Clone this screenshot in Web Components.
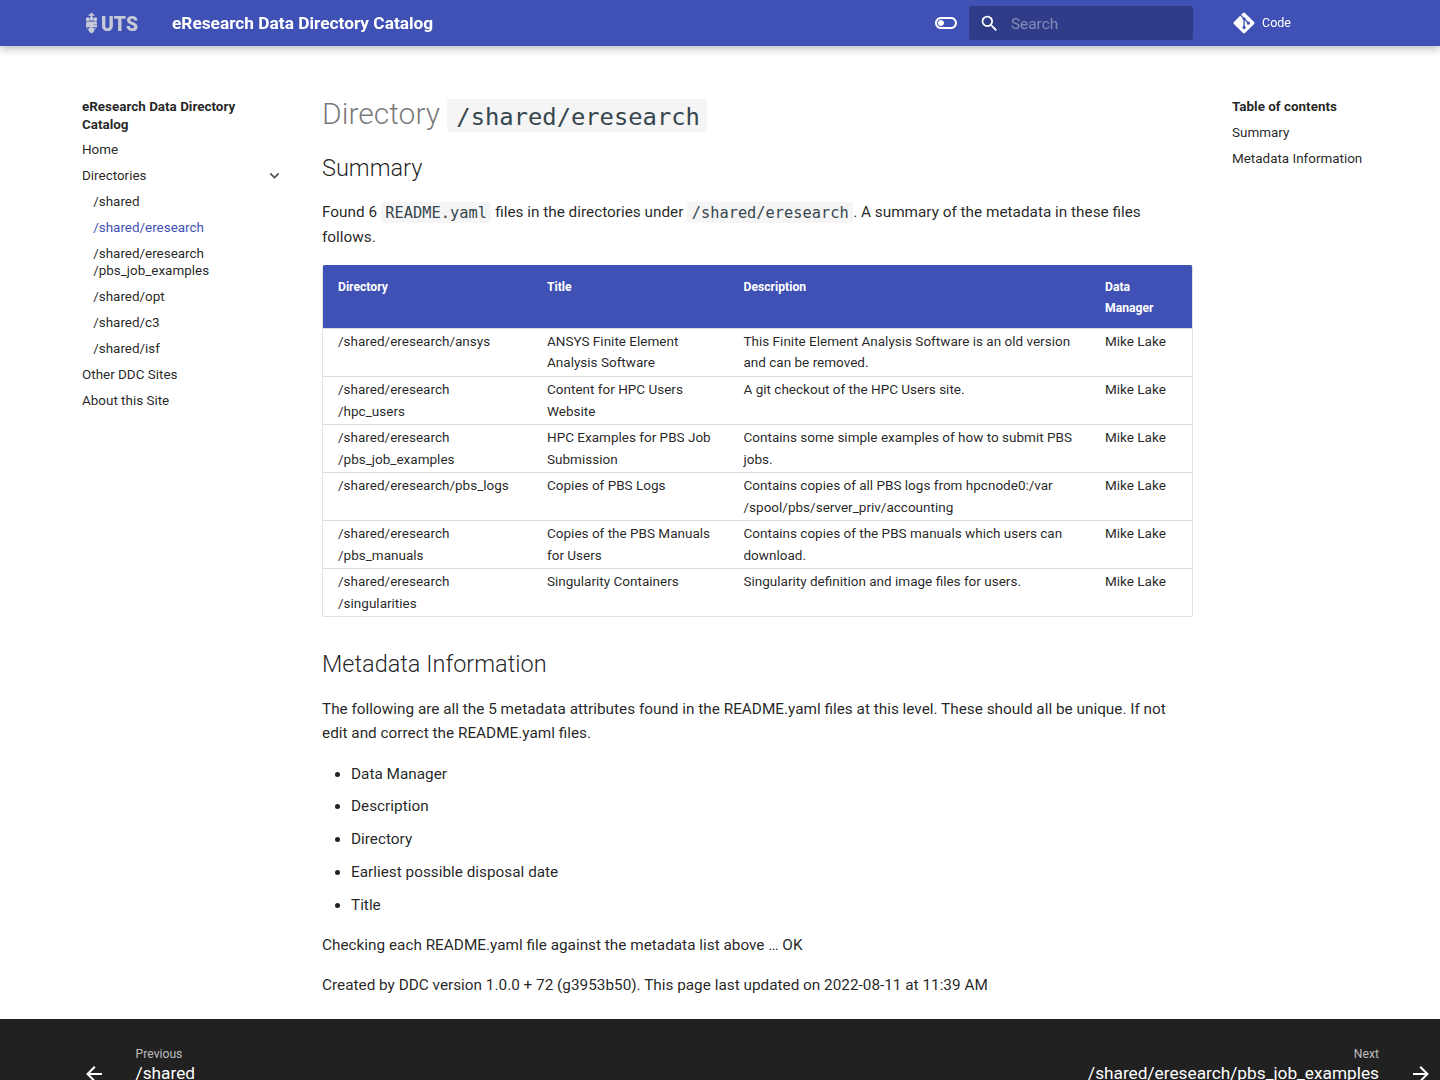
<!DOCTYPE html>
<html lang="en">
<head>
<meta charset="utf-8">
<title>eResearch Data Directory Catalog</title>
<style>
  html, body { margin: 0; padding: 0; height: 1080px; overflow: hidden; background: #fff; }
  body { font-family: Roboto, sans-serif; color: rgba(0,0,0,.87); }
</style>
</head>
<body>
<ddc-header></ddc-header>
<ddc-layout>
  <ddc-sidebar slot="left"></ddc-sidebar>
  <ddc-content></ddc-content>
  <ddc-toc slot="right"></ddc-toc>
</ddc-layout>
<ddc-footer></ddc-footer>

<script>
const ICONS = {
  toggle: 'M17 6H7c-3.31 0-6 2.69-6 6s2.69 6 6 6h10c3.31 0 6-2.69 6-6s-2.69-6-6-6zm0 10H7c-2.21 0-4-1.79-4-4s1.79-4 4-4h10c2.21 0 4 1.79 4 4s-1.79 4-4 4zM7 9c-1.66 0-3 1.34-3 3s1.34 3 3 3 3-1.34 3-3-1.34-3-3-3z',
  search: 'M9.5 3A6.5 6.5 0 0 1 16 9.5c0 1.61-.59 3.09-1.56 4.23l.27.27h.79l5 5-1.5 1.5-5-5v-.79l-.27-.27A6.516 6.516 0 0 1 9.5 16 6.5 6.5 0 0 1 3 9.5 6.5 6.5 0 0 1 9.5 3m0 2C7 5 5 7 5 9.5S7 14 9.5 14 14 12 14 9.5 12 5 9.5 5z',
  back: 'M20 11v2H8l5.5 5.5-1.42 1.42L4.16 12l7.92-7.92L13.5 5.5 8 11h12z',
  next: 'M4 11v2h12l-5.5 5.5 1.42 1.42L19.84 12l-7.92-7.92L10.5 5.5 16 11H4z',
  chevron: 'M7.41 8.59 12 13.17l4.59-4.58L18 10l-6 6-6-6 1.41-1.41z'
};
const GIT = 'M439.55 236.05 244 40.45a28.87 28.87 0 0 0-40.81 0l-40.66 40.63 51.52 51.52c27.06-9.14 52.68 16.77 43.39 43.68l49.66 49.66c34.23-11.8 61.18 31 35.47 56.69-26.49 26.49-70.21-2.87-56-37.34L240.22 199v121.85c25.3 12.54 22.26 41.85 9.08 55a34.34 34.34 0 0 1-48.55 0c-17.57-17.6-11.07-46.91 11.25-56v-123c-20.8-8.51-24.6-30.74-18.64-45L142.57 101 8.45 235.14a28.86 28.86 0 0 0 0 40.81l195.61 195.6a28.86 28.86 0 0 0 40.8 0l194.69-194.69a28.86 28.86 0 0 0 0-40.81z';
const icon = (name, size) => `<svg width="${size}" height="${size}" viewBox="0 0 24 24" fill="currentColor"><path d="${ICONS[name]}"/></svg>`;

class DdcHeader extends HTMLElement {
  connectedCallback() {
    const shadow = this.attachShadow({ mode: 'open' });
    shadow.innerHTML = `
      <style>
        :host {
          display: flex;
          align-items: center;
          position: fixed;
          z-index: 5;
          top: 0; left: 0; right: 0;
          height: 46px;
          background: #3f51b5;
          color: #fff;
          box-shadow: 0 0 4px rgba(0,0,0,.1), 0 4px 8px rgba(0,0,0,.2);
          font-family: Roboto, sans-serif;
        }
        .logo {
          display: flex;
          align-items: center;
          gap: 3px;
          margin-left: 85px;
          width: 87px;
          color: #c6c9d6;
        }
        .logo span {
          display: inline-block;
          padding-top: 2px;
          font: 900 21px/1 Roboto, sans-serif;
          transform: scaleX(.92);
          transform-origin: left center;
        }
        .title {
          flex: 0 0 auto;
          width: 762px;
          padding-top: 1px;
          font-size: 17.3px;
          font-weight: 700;
          line-height: 45px;
        }
        .toggle { display: flex; width: 35px; }
        .search {
          display: flex;
          align-items: center;
          box-sizing: border-box;
          width: 224px;
          height: 34px;
          margin-right: 40px;
          background: #2f3d88;
          border-radius: 2px;
          color: #fff;
        }
        .search svg { margin-left: 10px; }
        .search span {
          margin-left: 11px;
          padding-top: 1px;
          font-size: 15.36px;
          color: rgba(255,255,255,.4);
        }
        .repo { display: flex; align-items: center; gap: 7px; font-size: 12.5px; }
        .repo span { margin-top: -1px; }
      </style>
      <div class="logo">
        <svg width="13" height="24" viewBox="0 0 14 24" fill="currentColor">
          <rect x="6" y="1" width="2" height="5"/><rect x="4" y="2.5" width="6" height="1.8"/>
          <circle cx="3" cy="8" r="2.1"/><circle cx="7" cy="7.5" r="2.1"/><circle cx="11" cy="8" r="2.1"/>
          <path d="M1.5 10.5 12.5 10.5 13 13 1 15.5z"/>
          <path d="M1 14.5 13 13.5 13 16.5 1 16.5z"/>
          <path d="M1 16 7 23.5 13 16 10 18.5 7 16.5 4 18.5z"/><circle cx="7" cy="19.5" r="3"/>
        </svg>
        <span>UTS</span>
      </div>
      <div class="title">eResearch Data Directory Catalog</div>
      <div class="toggle">${icon('toggle', 24)}</div>
      <div class="search">${icon('search', 21)}<span>Search</span></div>
      <div class="repo">
        <svg width="22" height="24" viewBox="0 0 448 512" fill="currentColor"><path d="${GIT}"/></svg>
        <span>Code</span>
      </div>`;
  }
}

class DdcLayout extends HTMLElement {
  connectedCallback() {
    const shadow = this.attachShadow({ mode: 'open' });
    shadow.innerHTML = `
      <style>
        :host {
          display: flex;
          box-sizing: border-box;
          height: 1019px;
          padding: 96px 0 0 82px;
        }
        .left { flex: 0 0 240px; padding-top: 2px; }
        .main { flex: 0 0 871px; }
        .right { flex: 0 0 auto; margin-left: 39px; padding-top: 2px; }
      </style>
      <div class="left"><slot name="left"></slot></div>
      <div class="main"><slot></slot></div>
      <div class="right"><slot name="right"></slot></div>`;
  }
}

class DdcSidebar extends HTMLElement {
  connectedCallback() {
    const shadow = this.attachShadow({ mode: 'open' });
    const items = [
      ['Home', 0], ['Directories', 0, 'chev'], ['/shared', 1], ['/shared/eresearch', 1, 'active'],
      ['/shared/eresearch<br>/pbs_job_examples', 1], ['/shared/opt', 1], ['/shared/c3', 1], ['/shared/isf', 1],
      ['Other DDC Sites', 0], ['About this Site', 0]
    ];
    shadow.innerHTML = `
      <style>
        :host {
          display: block;
          font: 13.44px/17px Roboto, sans-serif;
          color: rgba(0,0,0,.87);
          width: 202px;
        }
        .label { font-weight: 700; line-height: 18px; margin-bottom: 7px; }
        .item { display: flex; justify-content: space-between; align-items: center; height: auto; margin-bottom: 9px; }
        .item.sub { padding-left: 11.2px; }
        .item.active { color: #3f51b5; }
        .item svg { display: block; margin: -1px 0; color: rgba(0,0,0,.7); }
      </style>
      <div class="label">eResearch Data Directory<br>Catalog</div>
      ${items.map(([t, sub, flag]) => `
        <div class="item ${sub ? 'sub' : ''} ${flag === 'active' ? 'active' : ''}">
          <span>${t}</span>${flag === 'chev' ? icon('chevron', 19) : ''}
        </div>`).join('')}`;
  }
}

class DdcToc extends HTMLElement {
  connectedCallback() {
    const shadow = this.attachShadow({ mode: 'open' });
    shadow.innerHTML = `
      <style>
        :host {
          display: block;
          font: 13.44px/17px Roboto, sans-serif;
          color: rgba(0,0,0,.87);
        }
        div { margin-bottom: 9px; white-space: nowrap; }
        .label { font-weight: 700; }
      </style>
      <div class="label">Table of contents</div>
      <div>Summary</div>
      <div>Metadata Information</div>`;
  }
}

class DdcCode extends HTMLElement {
  connectedCallback() {
    const shadow = this.attachShadow({ mode: 'open' });
    shadow.innerHTML = `
      <style>
        :host {
          display: inline;
          padding: 1.5px 4.5px;
          border-radius: 2px;
          background: #f5f5f5;
          color: #36464e;
          font-family: "DejaVu Sans Mono", "Liberation Mono", monospace;
          font-size: 1em;
        }
      </style><slot></slot>`;
  }
}

class DdcTable extends HTMLElement {
  connectedCallback() {
    const rows = [
      ['/shared/eresearch/ansys', 'ANSYS Finite Element<br>Analysis Software', 'This Finite Element Analysis Software is an old version<br>and can be removed.', 'Mike Lake'],
      ['/shared/eresearch<br>/hpc_users', 'Content for HPC Users<br>Website', 'A git checkout of the HPC Users site.', 'Mike Lake'],
      ['/shared/eresearch<br>/pbs_job_examples', 'HPC Examples for PBS Job<br>Submission', 'Contains some simple examples of how to submit PBS<br>jobs.', 'Mike Lake'],
      ['/shared/eresearch/pbs_logs', 'Copies of PBS Logs', 'Contains copies of all PBS logs from hpcnode0:/var<br>/spool/pbs/server_priv/accounting', 'Mike Lake'],
      ['/shared/eresearch<br>/pbs_manuals', 'Copies of the PBS Manuals<br>for Users', 'Contains copies of the PBS manuals which users can<br>download.', 'Mike Lake'],
      ['/shared/eresearch<br>/singularities', 'Singularity Containers', 'Singularity definition and image files for users.', 'Mike Lake']
    ];
    const shadow = this.attachShadow({ mode: 'open' });
    shadow.innerHTML = `
      <style>
        :host {
          display: block;
          width: 871px;
          height: 352px;
          box-sizing: border-box;
          border: 1px solid #e1e1e1;
          border-top: 0;
          border-radius: 2px;
          font: 13.52px/22px Roboto, sans-serif;
          overflow: hidden;
        }
        .row {
          display: grid;
          grid-template-columns: 209px 196.5px 361.5px 1fr;
          height: 48px;
          box-sizing: border-box;
          border-top: 1px solid #dcdcdc;
        }
        .row > div { padding: 1.4px 0 0 15px; white-space: nowrap; }
        .row.first > div { padding-top: 2.2px; line-height: 21px; }
        .row.last { height: 47.5px; }
        .head { height: 63.5px; border-top: 0; background: #3f51b5; color: #fff; font-size: 12.16px; font-weight: 700; }
        .row.head > div { padding-top: 12px; line-height: 21px; }
      </style>
      <div class="row head"><div>Directory</div><div>Title</div><div>Description</div><div>Data<br>Manager</div></div>
      ${rows.map((r, i) => `<div class="row ${i === 0 ? 'first' : ''} ${i === rows.length - 1 ? 'last' : ''}">${r.map(c => `<div>${c}</div>`).join('')}</div>`).join('')}`;
  }
}

class DdcContent extends HTMLElement {
  connectedCallback() {
    const shadow = this.attachShadow({ mode: 'open' });
    shadow.innerHTML = `
      <style>
        :host {
          display: block;
          font: 15.34px/25px Roboto, sans-serif;
          color: rgba(0,0,0,.87);
        }
        h1 {
          margin: -1px 0 19px;
          height: 38px;
          font-size: 30px;
          line-height: 38px;
          font-weight: 300;
          color: rgba(0,0,0,.54);
          white-space: nowrap;
        }
        h1 ddc-code { font-size: 23.8px; padding: 3.5px 7px 1.5px 9px; }
        h2 {
          margin: 0;
          font-size: 23.5px;
          line-height: 32px;
          font-weight: 300;
        }
        p { margin: 0; }
        .intro { margin: 16px 0 14.5px; }
        .meta-h { margin: 31px 0 18.7px; }
        .meta-p { line-height: 23.5px; margin-bottom: 16.4px; }
        ul { margin: 0 0 15.5px; padding: 0 0 0 29px; }
        li { line-height: 25px; margin-bottom: 7.8px; }
        .tail { margin-bottom: 15px; }
      </style>
      <h1>Directory <ddc-code>/shared/eresearch</ddc-code></h1>
      <h2>Summary</h2>
      <p class="intro">Found 6 <ddc-code>README.yaml</ddc-code> files in the directories under <ddc-code>/shared/eresearch</ddc-code>. A summary of the metadata in these files<br>follows.</p>
      <ddc-table></ddc-table>
      <h2 class="meta-h">Metadata Information</h2>
      <p class="meta-p">The following are all the 5 metadata attributes found in the README.yaml files at this level. These should all be unique. If not<br>edit and correct the README.yaml files.</p>
      <ul>
        <li>Data Manager</li>
        <li>Description</li>
        <li>Directory</li>
        <li>Earliest possible disposal date</li>
        <li>Title</li>
      </ul>
      <p class="tail">Checking each README.yaml file against the metadata list above … OK</p>
      <p>Created by DDC version 1.0.0 + 72 (g3953b50). This page last updated on 2022-08-11 at 11:39 AM</p>`;
  }
}

class DdcFooter extends HTMLElement {
  connectedCallback() {
    const shadow = this.attachShadow({ mode: 'open' });
    shadow.innerHTML = `
      <style>
        :host {
          display: flex;
          justify-content: space-between;
          box-sizing: border-box;
          height: 61px;
          padding: 26px 0 0 82px;
          overflow: hidden;
          background: #212121;
          color: #fff;
          font-family: Roboto, sans-serif;
        }
        a { display: flex; align-items: flex-start; }
        a svg { margin-top: 17px; }
        .txt { display: flex; flex-direction: column; }
        .dir { font-size: 12.16px; line-height: 18px; color: rgba(255,255,255,.7); }
        .name { font-size: 17.25px; line-height: 20px; white-space: nowrap; }
        .prev .txt { margin-left: 29.6px; }
        .next { margin-right: 7px; }
        .next .txt { margin-right: 30px; align-items: flex-end; }
      </style>
      <a class="prev">${icon('back', 24)}<div class="txt"><span class="dir">Previous</span><span class="name">/shared</span></div></a>
      <a class="next"><div class="txt"><span class="dir">Next</span><span class="name">/shared/eresearch/pbs_job_examples</span></div>${icon('next', 24)}</a>`;
  }
}

customElements.define('ddc-header', DdcHeader);
customElements.define('ddc-layout', DdcLayout);
customElements.define('ddc-sidebar', DdcSidebar);
customElements.define('ddc-toc', DdcToc);
customElements.define('ddc-code', DdcCode);
customElements.define('ddc-table', DdcTable);
customElements.define('ddc-content', DdcContent);
customElements.define('ddc-footer', DdcFooter);
</script>
</body>
</html>
